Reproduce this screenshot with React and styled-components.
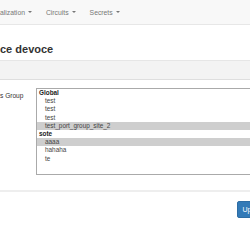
import styled, { createGlobalStyle } from 'styled-components';

const GlobalStyle = createGlobalStyle`
  html, body {
    margin: 0;
    padding: 0;
    overflow: hidden;
    background: #fff;
  }
  body {
    font-family: "Liberation Sans", Arial, sans-serif;
    color: #333;
  }
`;

const groups = [
  {
    label: 'Global',
    options: [
      { name: 'test' },
      { name: 'test' },
      { name: 'test' },
      { name: 'test_port_group_site_2', selected: true },
    ],
  },
  {
    label: 'sote',
    options: [
      { name: 'aaaa', selected: true },
      { name: 'hahaha' },
      { name: 'te' },
    ],
  },
];

const App = () => {
  return (
    <Page>
      <GlobalStyle />
      <Navbar>
        <NavItem>alization <Caret /></NavItem>
        <NavItem>Circuits <Caret /></NavItem>
        <NavItem>Secrets <Caret /></NavItem>
      </Navbar>
      <Title>ce devoce</Title>
      <Band />
      <FormRow>
        <Label>s Group</Label>
        <ListBox>
          {groups.map((g) => (
            <Group key={g.label}>
              <GroupLabel>{g.label}</GroupLabel>
              {g.options.map((o, i) => (
                <Option key={i} $selected={o.selected}>{o.name}</Option>
              ))}
            </Group>
          ))}
        </ListBox>
      </FormRow>
      <Footer>
        <Button>Update</Button>
      </Footer>
    </Page>
  );
};

export default App;

const Page = styled.div`
  width: 280px;
`;

const Navbar = styled.nav`
  align-items: center;
  background: #f8f8f8;
  border-bottom: 1px solid #e7e7e7;
  display: flex;
  gap: 14px;
  height: 24px;
`;

const NavItem = styled.span`
  align-items: center;
  color: #777;
  display: flex;
  font-size: 6.8px;
  gap: 3px;
  white-space: nowrap;
`;

const Caret = styled.span`
  border-left: 2px solid transparent;
  border-right: 2px solid transparent;
  border-top: 2px solid #777;
  display: inline-block;
  height: 0;
  width: 0;
`;

const Title = styled.h2`
  color: #333;
  font-size: 11px;
  font-weight: bold;
  line-height: 13px;
  margin: 18px 0 4px;
`;

const Band = styled.div`
  background: #f3f3f3;
  border-bottom: 1px solid #dedede;
  border-top: 1px solid #e6e6e6;
  height: 18px;
`;

const FormRow = styled.div`
  align-items: flex-start;
  display: flex;
  padding-top: 8px;
`;

const Label = styled.label`
  color: #333;
  flex: 0 0 36px;
  font-size: 6.6px;
  line-height: 8px;
  margin-top: 4px;
  white-space: nowrap;
`;

const ListBox = styled.div`
  border: 1px solid #aaa;
  box-sizing: border-box;
  font-size: 6.4px;
  height: 87px;
  width: 230px;
`;

const Group = styled.div`
  display: flex;
  flex-direction: column;
`;

const GroupLabel = styled.div`
  color: #222;
  font-weight: bold;
  height: 8.2px;
  line-height: 8.2px;
  padding-left: 2px;
`;

const Option = styled.div`
  background: ${(p) => (p.$selected ? '#cecece' : 'transparent')};
  color: #444;
  height: 8.2px;
  line-height: 8.2px;
  padding-left: 8px;
`;

const Footer = styled.div`
  border-top: 2px solid #eee;
  display: flex;
  justify-content: flex-end;
  margin-top: 15px;
  padding: 9px 10px 0 0;
`;

const Button = styled.button`
  background: #337ab7;
  border: 1px solid #2e6da4;
  border-radius: 2px;
  color: #fff;
  font-family: "Liberation Sans", Arial, sans-serif;
  font-size: 7px;
  height: 17px;
  padding: 0 4px;
`;
